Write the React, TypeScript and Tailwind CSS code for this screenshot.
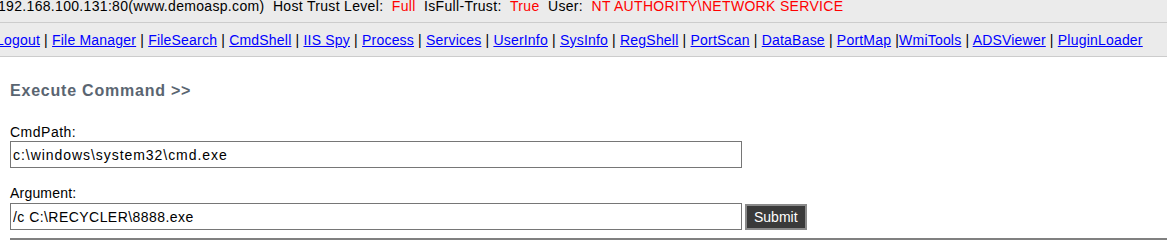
import React from 'react';

const links = [
  'Logout', 'File Manager', 'FileSearch', 'CmdShell', 'IIS Spy', 'Process', 'Services',
  'UserInfo', 'SysInfo', 'RegShell', 'PortScan', 'DataBase', 'PortMap', 'WmiTools',
  'ADSViewer', 'PluginLoader'
];

const NavLinks = () => (
  <div className="whitespace-nowrap -ml-[4px] leading-4 tracking-[0.2px]">
    {links.map((name, i) => (
      <React.Fragment key={name}>
        {i > 0 && (name === 'WmiTools' ? ' |' : ' | ')}
        <a href="#" className="text-[#0000ff] underline">{name}</a>
      </React.Fragment>
    ))}
  </div>
);

const App = () => {
  return (
    <div className="w-[1167px] h-[246px] overflow-hidden bg-white text-[14px] text-black font-['Liberation_Sans',Arial,sans-serif]">
      {/* Info bar */}
      <div className="h-[23px] bg-[#ebebeb] border-b border-[#cccccc] overflow-hidden">
        <div className="whitespace-nowrap leading-[13px] -ml-[2px] tracking-[0.32px]">
          192.168.100.131:80(www.demoasp.com)&nbsp;&nbsp;Host Trust Level:&nbsp;&nbsp;
          <span className="text-[#ff0000]">Full</span>&nbsp;&nbsp;IsFull-Trust:&nbsp;&nbsp;
          <span className="text-[#ff0000]">True</span>&nbsp;&nbsp;User:&nbsp;&nbsp;
          <span className="text-[#ff0000]">NT AUTHORITY\NETWORK SERVICE</span>
        </div>
      </div>

      {/* Menu */}
      <div className="h-[34px] bg-[#ebebeb] border-b border-[#cccccc] flex items-center">
        <NavLinks />
      </div>

      {/* Content */}
      <div className="pl-[10px]">
        <h2 className="mt-[24px] text-[16px] leading-5 font-bold text-[#5a6571] tracking-[0.78px]">Execute Command &gt;&gt;</h2>

        <div className="mt-[23px] leading-4 tracking-[0.5px]">CmdPath:</div>
        <input
          defaultValue="c:\windows\system32\cmd.exe"
          className="mt-[1px] block w-[732px] h-[27px] border border-[#767676] px-[2px] text-[14px] text-black outline-none tracking-[0.95px]"
        />

        <div className="mt-[17px] leading-4 tracking-[0.2px]">Argument:</div>
        <div className="mt-[2px] flex items-center gap-[3px]">
          <input
            defaultValue="/c C:\RECYCLER\8888.exe"
            className="block w-[732px] h-[27px] border border-[#767676] px-[2px] text-[14px] text-black outline-none tracking-[0.45px]"
          />
          <button className="h-[26px] px-[7px] bg-[#3a3a3a] border-2 border-[#8a8a8a] text-white text-[14px] leading-4">
            Submit
          </button>
        </div>

        <hr className="mt-[8px] border-0 h-[2px] bg-[#808080]" />
      </div>
    </div>
  );
};

export default App;
